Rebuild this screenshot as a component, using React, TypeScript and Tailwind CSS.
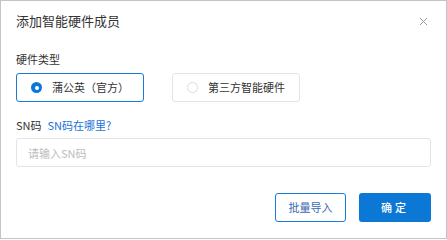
import React from "react";

type Option = { label: string; selected: boolean };

const options: Option[] = [
    { label: "蒲公英（官方）", selected: true },
    { label: "第三方智能硬件", selected: false },
];

const App: React.FC = () => {
    return (
        <div
            className="w-[447px] h-[239px] bg-white border border-[#c4c4c4] flex flex-col px-[15px] text-[#333]"
            style={{ fontFamily: '"Noto Sans CJK SC", "Noto Sans", sans-serif' }}
        >
            <div className="flex items-center justify-between pt-[10px]">
                <h1 className="text-[13px] leading-[20px] font-normal">添加智能硬件成员</h1>
                <svg width="9" height="9" viewBox="0 0 9 9" className="mr-[3px]">
                    <path d="M1 1 L8 8 M8 1 L1 8" stroke="#9a9a9a" strokeWidth="1" fill="none" />
                </svg>
            </div>

            <div className="mt-[20px] text-[11px] leading-[16px]">硬件类型</div>

            <div className="flex gap-[28px] mt-[6px]">
                {options.map((opt) => (
                    <div
                        key={opt.label}
                        className={`w-[128px] h-[29px] rounded-[3px] border flex items-center pl-[14px] text-[11px] ${
                            opt.selected ? "border-[#1a7bd9]" : "border-[#e4e4e4]"
                        }`}
                    >
                        {opt.selected ? (
                            <span className="w-[11px] h-[11px] rounded-full bg-[#0b78d6] flex items-center justify-center">
                                <span className="w-[4px] h-[4px] rounded-full bg-white" />
                            </span>
                        ) : (
                            <span className="w-[11px] h-[11px] rounded-full border border-[#dcdcdc]" />
                        )}
                        <span className="ml-[10px]">{opt.label}</span>
                    </div>
                ))}
            </div>

            <div className="mt-[15px] text-[11px] leading-[16px] flex gap-[6px]">
                <span>SN码</span>
                <a className="text-[#1a73d6] cursor-pointer">SN码在哪里?</a>
            </div>

            <input
                placeholder="请输入SN码"
                className="mt-[5px] h-[29px] w-full rounded-[3px] border border-[#e4e4e4] px-[11px] text-[11px] placeholder:text-[#bdbdbd] outline-none"
            />

            <div className="flex justify-end gap-[13px] mt-[26px] pr-[0px]">
                <button className="w-[71px] h-[29px] rounded-[3px] border border-[#1a7bd9] text-[#3a68b0] text-[11px] bg-white">
                    批量导入
                </button>
                <button className="w-[72px] h-[29px] rounded-[3px] bg-[#0b78d6] text-white text-[11px] font-medium tracking-[3px]">
                    确定
                </button>
            </div>
        </div>
    );
};

export default App;
